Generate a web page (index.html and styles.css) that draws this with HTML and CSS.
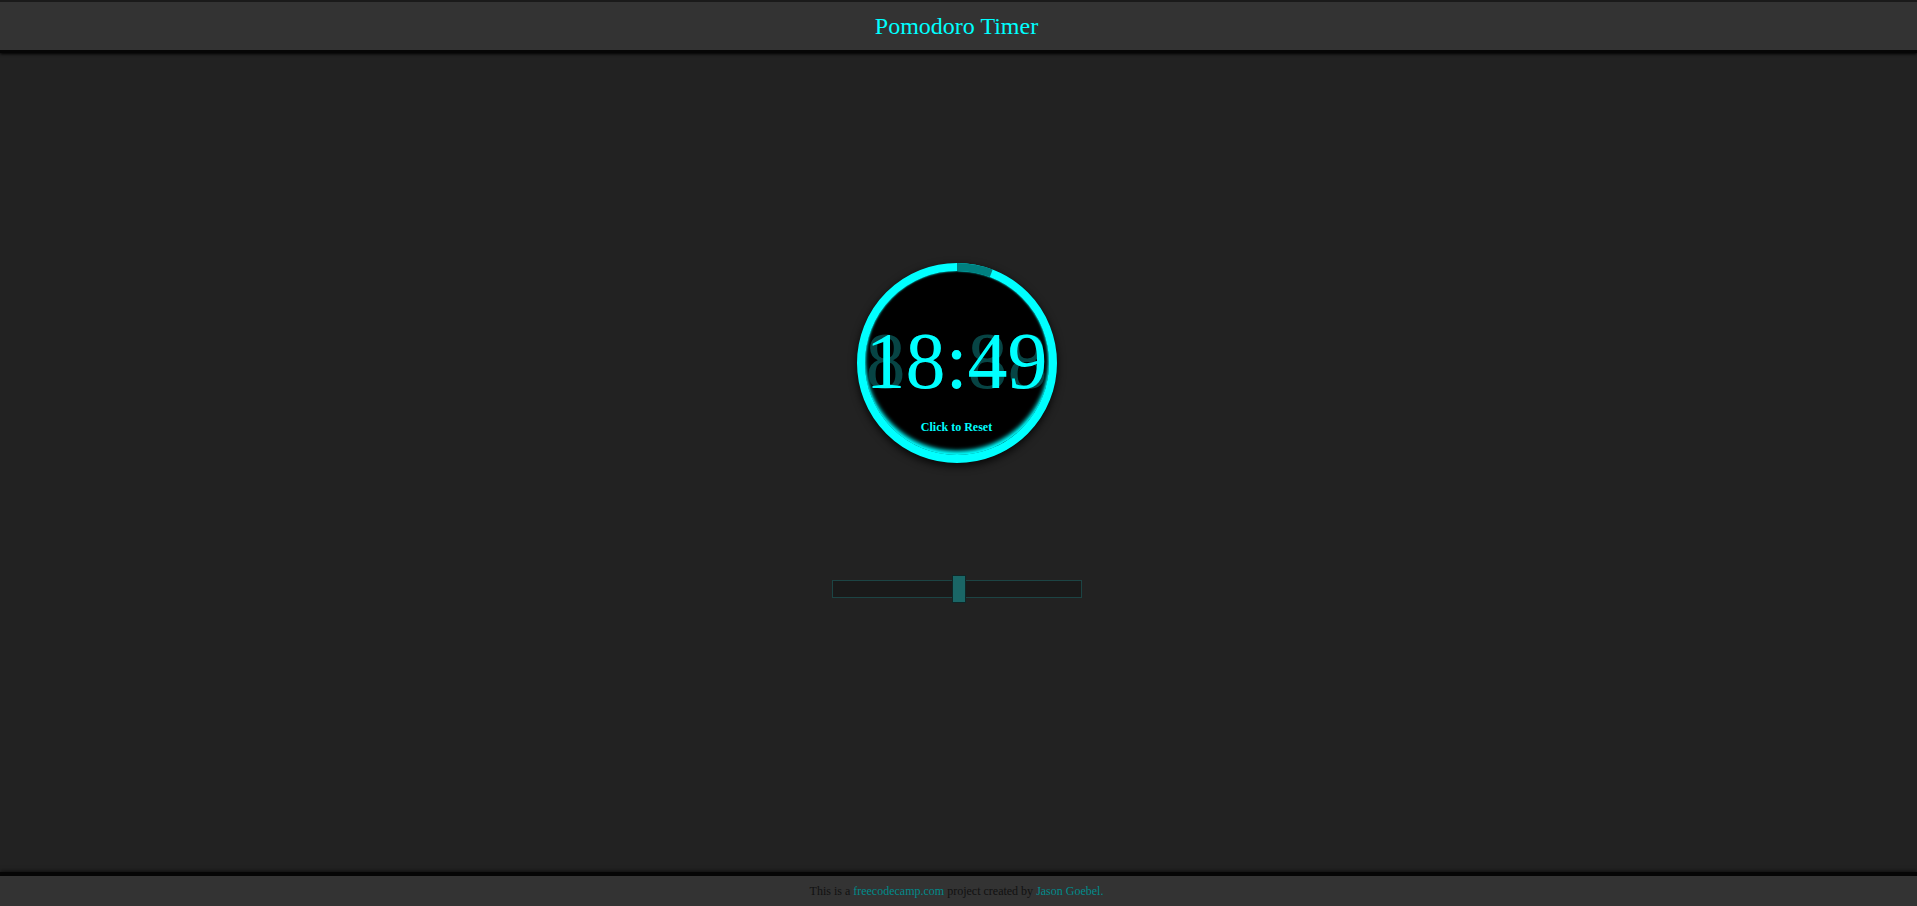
FILE: index.html
```html
<!DOCTYPE html>
<html lang="en">
<head>
<meta charset="utf-8">
<title>Pomodoro Timer</title>
<link rel="stylesheet" href="styles.css">
</head>
<body>
<header class="topbar">
  <h1 class="title">Pomodoro Timer</h1>
</header>
<main class="stage">
  <div class="clock">
    <svg class="ring" width="200" height="200" viewBox="0 0 200 200">
      <circle class="ring-done" cx="100" cy="100" r="96" transform="rotate(-90 100 100)"></circle>
    </svg>
    <div class="digits">
      <span class="ghost">88:88</span>
      <span class="time">18:49</span>
    </div>
    <div class="reset">Click to Reset</div>
  </div>
  <div class="slider">
    <div class="track"></div>
    <div class="thumb" style="left: 120px;"></div>
  </div>
</main>
<footer class="foot">
  <p class="credit">This is a <a href="#">freecodecamp.com</a> project created by <a href="#">Jason Goebel.</a></p>
</footer>
</body>
</html>
```
FILE: styles.css
```css
* { box-sizing: border-box; }
html, body { height: 100%; }
body {
  margin: 0;
  background: #222222;
  font-family: "Liberation Serif", "Times New Roman", serif;
  display: flex;
  flex-direction: column;
  overflow: hidden;
}
.topbar {
  height: 53px;
  background: #333333;
  border-top: 2px solid #1a1a1a;
  border-bottom: 3px solid #060606;
  box-shadow: 0 1px 3px #000;
  display: flex;
  align-items: center;
  justify-content: center;
  padding-right: 4px;
  flex: none;
}
.title {
  margin: 0;
  font-weight: normal;
  font-size: 24px;
  color: #00ffff;
  line-height: 28px;
}
.stage {
  flex: 1;
  display: flex;
  flex-direction: column;
  align-items: center;
  padding-top: 210px;
  padding-right: 4px;
}
.clock {
  position: relative;
  width: 200px;
  height: 200px;
  border-radius: 50%;
  background: #000;
  border: 8px solid #00ffff;
  box-shadow: 0 3px 8px rgba(0,0,0,0.85), inset 0 -4px 4px #00ffff, inset 0 0 2px #00ffff;
  display: flex;
  flex-direction: column;
  align-items: center;
  padding-top: 50px;
  flex: none;
}
.ring {
  position: absolute;
  left: -8px;
  top: -8px;
}
.ring-done {
  fill: none;
  stroke: #008080;
  stroke-width: 8;
  stroke-dasharray: 35 700;
}
.digits {
  position: relative;
  font-size: 80px;
  line-height: 80px;
  height: 80px;
  white-space: nowrap;
}
.ghost {
  position: absolute;
  left: 0;
  top: 0;
  color: #074444;
}
.time {
  position: relative;
  color: #00ffff;
}
.reset {
  margin-top: 19px;
  font-size: 12px;
  font-weight: bold;
  color: #00ffff;
  line-height: 14px;
}
.slider {
  position: relative;
  width: 250px;
  height: 28px;
  margin-top: 112px;
  flex: none;
}
.track {
  margin-top: 5px;
  height: 18px;
  background: #1a1a1a;
  border: 1px solid #1c4444;
}
.thumb {
  position: absolute;
  top: 0;
  width: 14px;
  height: 28px;
  background: #1a6666;
  border: 1px solid #0f2626;
}
.foot {
  flex: none;
  height: 34px;
  background: #333333;
  border-top: 4px solid #050505;
  box-shadow: 0 -1px 4px rgba(0,0,0,0.6);
  display: flex;
  align-items: center;
  justify-content: center;
  padding-right: 4px;
}
.credit {
  margin: 0;
  font-size: 12px;
  color: #111111;
}
.credit a {
  color: #008b8b;
  text-decoration: none;
}
```
